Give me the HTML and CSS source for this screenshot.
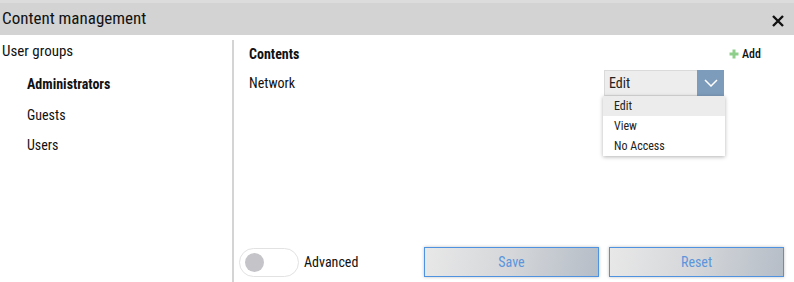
FILE: index.html
```html
<!DOCTYPE html>
<html>
<head>
<meta charset="utf-8">
<link rel="stylesheet" href="styles.css">
</head>
<body>
<div class="dialog">
  <div class="header">
    <span class="title">Content management</span>
    <svg class="close" width="12" height="12" viewBox="0 0 12 12"><path d="M1 1L11 11M11 1L1 11" stroke="#111" stroke-width="2.4"/></svg>
  </div>
  <div class="body">
    <div class="sidebar">
      <div class="side-title">User groups</div>
      <ul class="groups">
        <li class="active">Administrators</li>
        <li>Guests</li>
        <li>Users</li>
      </ul>
    </div>
    <div class="main">
      <div class="main-head">
        <span class="contents">Contents</span>
        <span class="add"><svg width="10" height="10" viewBox="0 0 10 10"><path d="M5 0.5V9.5M0.5 5H9.5" stroke="#8fcf8c" stroke-width="3"/></svg>Add</span>
      </div>
      <div class="row">
        <span class="label">Network</span>
        <div class="select-wrap">
          <div class="select">
            <span class="value">Edit</span>
            <span class="arrow"><svg width="14" height="8" viewBox="0 0 14 8"><path d="M1 1L7 7L13 1" fill="none" stroke="#fff" stroke-width="1.5"/></svg></span>
          </div>
          <ul class="menu">
            <li class="hover">Edit</li>
            <li>View</li>
            <li>No Access</li>
          </ul>
        </div>
      </div>
      <div class="footer">
        <div class="toggle-group">
          <span class="toggle"><span class="knob"></span></span>
          <span class="toggle-label">Advanced</span>
        </div>
        <div class="buttons">
          <button class="btn">Save</button>
          <button class="btn">Reset</button>
        </div>
      </div>
    </div>
  </div>
</div>
</body>
</html>
```
FILE: styles.css
```css
* { box-sizing: border-box; }
html, body { margin: 0; padding: 0; background: #fff; }
body {
  width: 794px; height: 282px; overflow: hidden;
  font-family: "Roboto Condensed", "Liberation Sans Narrow", Roboto, sans-serif;
  color: #111;
}
.dialog { display: flex; flex-direction: column; height: 282px; }
.header {
  height: 35px; flex-shrink: 0; background: #d3d3d3;
  border-top: 3px solid #dcdcdc;
  display: flex; align-items: center; justify-content: space-between;
  padding: 0 10px 0 2px;
}
.title { font-size: 17px; line-height: 20px; margin-top: -2px; }
.close { margin-top: 4px; }
.body { flex: 1; display: flex; padding-top: 5px; }
.sidebar { width: 234px; flex-shrink: 0; border-right: 2px solid #d4d4d4; }
.side-title { font-size: 15px; padding: 2px 0 0 2px; line-height: 18px; }
.groups { list-style: none; margin: 0; padding: 9px 0 0 27px; }
.groups li { font-size: 14px; line-height: 30.5px; }
.groups li.active { font-weight: bold; }
.main { flex: 1; min-width: 0; display: flex; flex-direction: column; }
.main-head { display: flex; justify-content: space-between; align-items: center; padding: 5px 33px 0 15px; height: 23px; }
.contents { font-weight: bold; font-size: 14px; }
.add { font-size: 12px; font-weight: 500; display: flex; align-items: center; gap: 3px; }
.row { display: flex; justify-content: space-between; padding: 0 70px 0 15px; margin-top: 7px; height: 25px; }
.label { font-size: 14px; line-height: 26px; }
.select-wrap { position: relative; width: 120px; }
.select { display: flex; height: 26px; border: 1px solid #dadada; background: #ededed; }
.value { flex: 1; font-size: 14px; line-height: 24px; padding-left: 4px; color: #222; }
.arrow { width: 27px; margin: -1px -1px -1px 0; background: #7d9bbb; display: flex; align-items: center; justify-content: center; }
.menu {
  position: absolute; top: 26px; left: -1px; width: 122px;
  list-style: none; margin: 0; padding: 0; background: #fff;
  box-shadow: 0 1px 4px rgba(0,0,0,0.3);
}
.menu li { font-size: 12px; line-height: 20px; padding-left: 11px; color: #222; }
.menu li.hover { background: #ececec; }
.footer { margin-top: auto; display: flex; align-items: center; padding: 0 11px 4px 5px; height: 36px; }
.toggle-group { display: flex; align-items: center; width: 185px; flex-shrink: 0; }
.toggle { width: 60px; height: 29px; border: 1px solid #e2e2e2; border-radius: 15px; display: flex; align-items: center; padding-left: 5px; }
.knob { width: 19px; height: 19px; border-radius: 50%; background: #c5c5c9; }
.toggle-label { font-size: 14px; margin-left: 5px; }
.buttons { display: flex; gap: 10px; }
.btn {
  width: 175px; height: 30px;
  border: 1px solid #4f93e0;
  background: linear-gradient(100deg, #e8e8e8 0%, #d4d6d9 50%, #b5bdc7 100%);
  box-shadow: 0 0 3px rgba(0,0,0,0.25);
  color: #5b95dc; font-family: inherit; font-size: 14px;
  padding: 0;
}
```
